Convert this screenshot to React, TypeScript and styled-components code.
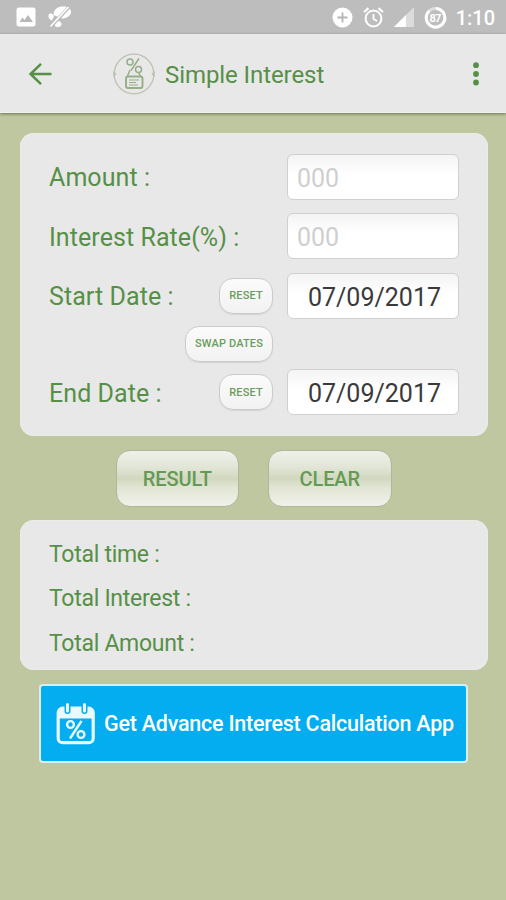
import React from 'react';
import styled, { createGlobalStyle } from 'styled-components';

const GREEN = '#569047';

const GlobalStyle = createGlobalStyle`
  * { box-sizing: border-box; }
  body { margin: 0; background: #bfc7a0; font-family: Roboto, sans-serif; }
  button, input { font-family: inherit; }
`;

const Screen = styled.div`
  width: 506px;
  height: 900px;
  overflow: hidden;
  display: flex;
  flex-direction: column;
  background: #bfc7a0;
`;

const StatusBar = styled.div`
  height: 34px;
  flex: none;
  display: flex;
  align-items: center;
  justify-content: space-between;
  padding: 0 11px 0 16px;
  background: #bdbdbd;
  color: #fff;
`;

const StatusGroup = styled.div<{ $gap: number }>`
  display: flex;
  align-items: center;
  gap: ${(p) => p.$gap}px;
`;

const Clock = styled.span`
  font-size: 20px;
  font-weight: 500;
  line-height: 34px;
  margin-left: -1.5px;
  padding-top: 2px;
  letter-spacing: 0;
`;

const AppBar = styled.header`
  height: 79px;
  flex: none;
  display: flex;
  align-items: center;
  padding: 1px 27px 0 26px;
  background: #e8e8e8;
  border-bottom: 1px solid #f0f0ee;
  box-shadow: 0 1px 3px rgba(60, 70, 30, 0.65);
`;

const Title = styled.h1`
  flex: 1;
  margin: 2px 0 0 10px;
  font-size: 24px;
  font-weight: 400;
  line-height: 30px;
  letter-spacing: -0.08px;
  color: ${GREEN};
`;

const Logo = styled.svg`
  margin-left: 59px;
`;

const Card = styled.section<{ $height: number; $top: number }>`
  width: 468px;
  height: ${(p) => p.$height}px;
  margin: ${(p) => p.$top}px 0 0 20px;
  flex: none;
  padding: 21px 29px 0;
  border-radius: 14px;
  background: #e8e8e8;
  box-shadow: inset 0 0 0 1px #ebece6;
`;

const Row = styled.div<{ $after: number }>`
  height: 45px;
  margin-bottom: ${(p) => p.$after}px;
  display: flex;
  align-items: center;
`;

const Label = styled.label`
  flex: 1;
  font-size: 25px;
  line-height: 30px;
  padding-top: 3px;
  letter-spacing: 0.07px;
  white-space: nowrap;
  color: ${GREEN};
`;

const Field = styled.input<{ $date?: boolean }>`
  width: 172px;
  height: 46px;
  padding: ${(p) => (p.$date ? '3px 17px 0 0' : '3px 9px 0')};
  text-align: ${(p) => (p.$date ? 'right' : 'left')};
  font-size: 25px;
  color: #3a3a3a;
  border: 1.5px solid #d0d0d0;
  border-radius: 6px;
  background: linear-gradient(#f4f4f4, #fff 45%);
  outline: none;
  &::placeholder { color: #cfcfcf; opacity: 1; }
`;

const Pill = styled.button<{ $wide?: boolean }>`
  width: ${(p) => (p.$wide ? 88 : 54)}px;
  height: 36px;
  padding: 0;
  margin-right: 14px;
  flex: none;
  border: 1px solid #cbcbcb;
  border-radius: 14px;
  background: linear-gradient(#fbfbfb, #f2f2f2);
  box-shadow: 0 1px 1px rgba(0, 0, 0, 0.08);
  font-size: 11px;
  font-weight: 500;
  letter-spacing: 0.15px;
  white-space: nowrap;
  color: #6a9d5c;
`;

const SwapRow = styled.div`
  height: 36px;
  width: 238px;
  margin-bottom: 8px;
  display: flex;
  justify-content: flex-end;
`;

const Actions = styled.div`
  display: flex;
  gap: 29px;
  margin: 14px 0 0 115.5px;
`;

const ActionButton = styled.button`
  width: 123.5px;
  height: 57px;
  padding: 0;
  border: 1px solid #b0b69c;
  border-radius: 14px;
  background: linear-gradient(#eff1e9 0%, #e1e5d6 30%, #d1d8be 50%, #e1e5d4 66%, #f0f2e9 100%);
  font-size: 20px;
  font-weight: 500;
  letter-spacing: -0.1px;
  color: #659a55;
`;

const Total = styled.div`
  height: 44.6px;
  font-size: 23px;
  line-height: 28px;
  letter-spacing: -0.28px;
  color: ${GREEN};
`;

const Totals = styled(Card)`
  padding-top: 20.5px;
`;

const Banner = styled.button`
  width: 429px;
  height: 79px;
  margin: 14px 0 0 39px;
  padding: 0 0 0 15px;
  display: flex;
  align-items: center;
  border: 2px solid #d9eef0;
  border-radius: 4px;
  background: #03adef;
  color: #fff;
`;

const BannerText = styled.span`
  margin-left: 8px;
  font-size: 21.5px;
  font-weight: 500;
  letter-spacing: -0.23px;
  white-space: nowrap;
`;

const PictureIcon = () => (
  <svg width="20" height="20" viewBox="0 0 20 20">
    <rect x="0.5" y="0.5" width="19" height="19" rx="2.5" fill="#fff" />
    <path d="M3.500 15l3-4.500 2 2.500 3.500-5 5 7z" fill="#b8b8b8" />
  </svg>
);

const MutedIcon = () => (
  <svg width="24" height="22" viewBox="0 0 24 22">
    <path d="M5.500 9C5.500 3 10 .5 15 .5c5 0 8 2 8 5.500 0 4-5 6.500-9 6.500z" fill="#fff" />
    <path d="M.5 9c1-2.500 4.500-1.500 5.500 1L4 14.500C1 13.500 0 11 .5 9z" fill="#fff" />
    <path d="M7 16.500c2-2.500 5.500-1.500 6.500 1 .3 2.500-1.500 3.500-4 3.500-2.500 0-3.500-2-2.500-4.500z" fill="#fff" />
    <path d="M21.500 .5L2.500 21" stroke="#bdbdbd" strokeWidth="3.400" />
    <path d="M20.500 1L2.500 20.500" stroke="#fff" strokeWidth="1.600" />
  </svg>
);

const PlusIcon = () => (
  <svg width="21" height="21" viewBox="0 0 21 21">
    <circle cx="10.500" cy="10.500" r="10" fill="#fff" />
    <path d="M10.500 5.500v10M5.500 10.500h10" stroke="#b5b5b5" strokeWidth="1.800" />
  </svg>
);

const AlarmIcon = () => (
  <svg width="21" height="21" viewBox="0 0 21 21" fill="none" stroke="#fff">
    <circle cx="10.500" cy="11.500" r="7.900" strokeWidth="2" />
    <path d="M10.500 7v5l3.500 2" strokeWidth="1.800" />
    <path d="M1 5l4.500-3.800M20 5l-4.500-3.800" strokeWidth="2.200" />
  </svg>
);

const SignalIcon = () => (
  <svg width="20" height="20" viewBox="0 0 20 20">
    <path d="M0 20L20 0v20z" fill="#dcdcdc" />
    <path d="M0 20L12 8v12z" fill="#fff" />
  </svg>
);

const BatteryText = styled.text`
  font: 700 11px Roboto, sans-serif;
  letter-spacing: -0.8px;
`;

const BatteryIcon = () => (
  <svg width="23" height="23" viewBox="0 0 23 23">
    <circle cx="11.500" cy="11.800" r="9.300" fill="none" stroke="#dedede" strokeWidth="2.800" />
    <path d="M12 2.500a9.300 9.300 0 1 1-6.800 2.500" fill="none" stroke="#fff" strokeWidth="3" />
    <BatteryText x="11" y="15.600" textAnchor="middle" fill="#fff">87</BatteryText>
  </svg>
);

const BackIcon = () => (
  <svg width="28" height="26" viewBox="0 0 28 26" fill="none" stroke={GREEN} strokeWidth="2.500">
    <path d="M25.500 13H5M15 2.800L4.500 13 15 23.200" />
  </svg>
);

const LogoIcon = () => (
  <Logo width="42" height="42" viewBox="0 0 42 42" fill="none" stroke="#96ad89" strokeWidth="1.500">
    <circle cx="21" cy="21" r="19.800" stroke="#bcc4b4" strokeWidth="1.300" />
    <path d="M0 19l2.500 2L0 23M42 19l-2.500 2 2.500 2" stroke="#b7bfaf" />
    <circle cx="17" cy="9" r="3" />
    <circle cx="25.500" cy="16.500" r="3" />
    <path d="M26 5.500L18 17.500M17 17l-2.500 6M25.500 19.500l2 3.500" />
    <rect x="13" y="23.500" width="16.500" height="11.500" rx="2" strokeWidth="1.900" />
    <path d="M16 27h10M16 29.500h7M16 32h9" strokeWidth="1" />
  </Logo>
);

const MoreIcon = () => (
  <svg width="6" height="24" viewBox="0 0 6 24" fill={GREEN}>
    <circle cx="3" cy="3.200" r="2.900" />
    <circle cx="3" cy="12" r="2.900" />
    <circle cx="3" cy="20.500" r="2.900" />
  </svg>
);

const CalendarIcon = () => (
  <svg width="40" height="42" viewBox="0 0 40 42" fill="none" stroke="#e8faff">
    <rect x="2.200" y="5.200" width="35" height="34.500" rx="4.500" strokeWidth="3.200" />
    <path d="M2 15.500V8q0-3 3-3h29.500q3 0 3 3v7.500z" fill="#e8faff" stroke="none" />
    <path d="M11.500 0v8M28.500 0v8" stroke="#03adef" strokeWidth="6" strokeLinecap="round" />
    <path d="M11.500 1.500v6.500M28.500 1.500v6.500" strokeWidth="3" strokeLinecap="round" />
    <g strokeWidth="2.400">
      <circle cx="14.500" cy="21.500" r="3.400" />
      <circle cx="25" cy="31.500" r="3.400" />
      <path d="M25.500 18L14 35.500" />
    </g>
  </svg>
);

export default function App() {
  return (
    <>
      <GlobalStyle />
      <Screen>
        <StatusBar>
          <StatusGroup $gap={12}>
            <PictureIcon />
            <MutedIcon />
          </StatusGroup>
          <StatusGroup $gap={10}>
            <PlusIcon />
            <AlarmIcon />
            <SignalIcon />
            <BatteryIcon />
            <Clock>1:10</Clock>
          </StatusGroup>
        </StatusBar>
        <AppBar>
          <BackIcon />
          <LogoIcon />
          <Title>Simple Interest</Title>
          <MoreIcon />
        </AppBar>
        <Card $height={303} $top={20}>
          <Row $after={14.5}>
            <Label>Amount :</Label>
            <Field placeholder="000" />
          </Row>
          <Row $after={14.5}>
            <Label>Interest Rate(%) :</Label>
            <Field placeholder="000" />
          </Row>
          <Row $after={7.5}>
            <Label>Start Date :</Label>
            <Pill>RESET</Pill>
            <Field $date defaultValue="07/09/2017" />
          </Row>
          <SwapRow>
            <Pill $wide>SWAP DATES</Pill>
          </SwapRow>
          <Row $after={0}>
            <Label>End Date :</Label>
            <Pill>RESET</Pill>
            <Field $date defaultValue="07/09/2017" />
          </Row>
        </Card>
        <Actions>
          <ActionButton>RESULT</ActionButton>
          <ActionButton>CLEAR</ActionButton>
        </Actions>
        <Totals $height={150} $top={13}>
          <Total>Total time :</Total>
          <Total>Total Interest :</Total>
          <Total>Total Amount :</Total>
        </Totals>
        <Banner>
          <CalendarIcon />
          <BannerText>Get Advance Interest Calculation App</BannerText>
        </Banner>
      </Screen>
    </>
  );
}
